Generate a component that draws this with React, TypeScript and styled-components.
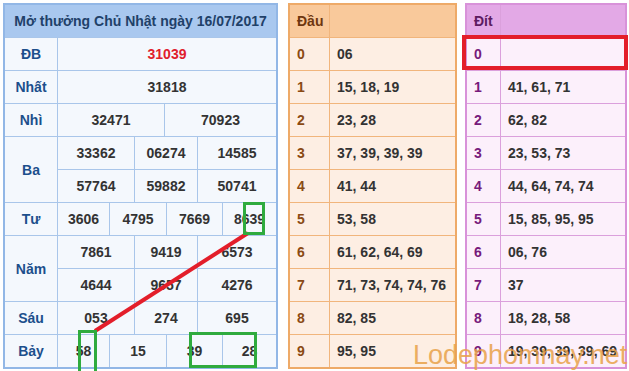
import React from 'react';
import styled, { createGlobalStyle } from 'styled-components';

const Global = createGlobalStyle`
  html, body { margin: 0; padding: 0; background: #ffffff; }
  body { font-family: "Liberation Sans", Arial, sans-serif; }
`;

const Page = styled.div`
  position: relative;
  width: 629px;
  height: 371px;
  overflow: hidden;
  box-sizing: border-box;
  padding: 3px 0 0 3px;
  display: flex;
  align-items: flex-start;
`;

const Frame = styled.div<{ $line: string; $edge: string; $w: number; $ml?: number }>`
  box-sizing: border-box;
  width: ${p => p.$w}px;
  margin-left: ${p => p.$ml ?? 0}px;
  display: flex;
  flex-direction: column;
  gap: 1px;
  background: ${p => p.$line};
  border: 2px solid ${p => p.$edge};
`;

const Title = styled.div`
  height: 32px;
  background: #a9c8ef;
  color: #1f4169;
  font-weight: bold;
  font-size: 14px;
  display: flex;
  align-items: center;
  justify-content: center;
`;

const Section = styled.div`
  display: grid;
  grid-template-columns: 52px 1fr;
  gap: 1px;
`;

const Label = styled.div`
  background: #f4f8fd;
  color: #1c4f8c;
  font-weight: bold;
  font-size: 14px;
  display: flex;
  align-items: center;
  justify-content: center;
`;

const Values = styled.div`
  display: flex;
  flex-direction: column;
  gap: 1px;
`;

const SubRow = styled.div<{ $cols: string }>`
  display: grid;
  grid-template-columns: ${p => p.$cols};
  gap: 1px;
`;

const Num = styled.div<{ $red?: boolean }>`
  height: 32px;
  background: #f4f8fd;
  color: ${p => (p.$red ? '#e0202c' : '#333333')};
  font-weight: bold;
  font-size: 14px;
  display: flex;
  align-items: center;
  justify-content: center;
`;

const LRow = styled.div<{ $cols: string }>`
  display: grid;
  grid-template-columns: ${p => p.$cols};
  gap: 1px;
`;

const LCell = styled.div<{ $bg: string; $fg: string }>`
  height: 32px;
  box-sizing: border-box;
  padding-left: 7px;
  background: ${p => p.$bg};
  color: ${p => p.$fg};
  font-weight: bold;
  font-size: 14px;
  display: flex;
  align-items: center;
  white-space: nowrap;
`;

const Overlay = styled.svg`
  position: absolute;
  left: 0;
  top: 0;
  pointer-events: none;
`;

const Watermark = styled.div`
  position: absolute;
  left: 413px;
  top: 342px;
  font-size: 27px;
  line-height: 27px;
  color: #e9a24a;
  opacity: 0.85;
  white-space: nowrap;
  pointer-events: none;
`;

type Sec = { label: string; rows: { cols: string; vals: string[] }[] };

const C4 = '51px 56px 55px 1fr';
const C3 = '76px 62px 1fr';

const sections: Sec[] = [
  { label: 'ĐB', rows: [{ cols: '1fr', vals: ['31039'] }] },
  { label: 'Nhất', rows: [{ cols: '1fr', vals: ['31818'] }] },
  { label: 'Nhì', rows: [{ cols: '106px 1fr', vals: ['32471', '70923'] }] },
  {
    label: 'Ba',
    rows: [
      { cols: C3, vals: ['33362', '06274', '14585'] },
      { cols: C3, vals: ['57764', '59882', '50741'] },
    ],
  },
  { label: 'Tư', rows: [{ cols: C4, vals: ['3606', '4795', '7669', '8639'] }] },
  {
    label: 'Năm',
    rows: [
      { cols: C3, vals: ['7861', '9419', '6573'] },
      { cols: C3, vals: ['4644', '9657', '4276'] },
    ],
  },
  { label: 'Sáu', rows: [{ cols: C3, vals: ['053', '274', '695'] }] },
  { label: 'Bảy', rows: [{ cols: C4, vals: ['58', '15', '39', '28'] }] },
];

const dau = [
  '06',
  '15, 18, 19',
  '23, 28',
  '37, 39, 39, 39',
  '41, 44',
  '53, 58',
  '61, 62, 64, 69',
  '71, 73, 74, 74, 76',
  '82, 85',
  '95, 95',
];

const dit = [
  '',
  '41, 61, 71',
  '62, 82',
  '23, 53, 73',
  '44, 64, 74, 74',
  '15, 85, 95, 95',
  '06, 76',
  '37',
  '18, 28, 58',
  '19, 39, 39, 39, 69',
];

type Theme = {
  head: string;
  cell: string;
  line: string;
  edge: string;
  label: string;
  headText: string;
};

const orange: Theme = {
  head: '#f9c99b',
  cell: '#fdeee3',
  line: '#f1b57c',
  edge: '#eeaa68',
  label: '#8a4a14',
  headText: '#6e3710',
};

const purple: Theme = {
  head: '#e3a9e6',
  cell: '#fcf0fb',
  line: '#dba0dc',
  edge: '#d892d9',
  label: '#771a7b',
  headText: '#5c1b60',
};

function Lookup({
  title,
  data,
  t,
  w,
  cols,
  ml,
}: {
  title: string;
  data: string[];
  t: Theme;
  w: number;
  cols: string;
  ml: number;
}) {
  return (
    <Frame $line={t.line} $edge={t.edge} $w={w} $ml={ml}>
      <LRow $cols={cols}>
        <LCell $bg={t.head} $fg={t.headText}>{title}</LCell>
        <LCell $bg={t.head} $fg={t.headText} />
      </LRow>
      {data.map((v, i) => (
        <LRow $cols={cols} key={i}>
          <LCell $bg={t.cell} $fg={t.label}>{i}</LCell>
          <LCell $bg={t.cell} $fg="#333333">{v}</LCell>
        </LRow>
      ))}
    </Frame>
  );
}

export default function App() {
  return (
    <>
      <Global />
      <Page>
        <Frame $line="#a9c6ea" $edge="#92b7e6" $w={275}>
          <Title>Mở thưởng Chủ Nhật ngày 16/07/2017</Title>
          {sections.map(s => (
            <Section key={s.label}>
              <Label>{s.label}</Label>
              <Values>
                {s.rows.map((r, ri) => (
                  <SubRow $cols={r.cols} key={ri}>
                    {r.vals.map((v, vi) => (
                      <Num key={vi} $red={s.label === 'ĐB'}>
                        {v}
                      </Num>
                    ))}
                  </SubRow>
                ))}
              </Values>
            </Section>
          ))}
        </Frame>
        <Lookup title="Đầu" data={dau} t={orange} w={169} cols="39px 1fr" ml={10} />
        <Lookup title="Đít" data={dit} t={purple} w={162} cols="33px 1fr" ml={8} />
        <Watermark>Lodephomnay.net</Watermark>
        <Overlay width={629} height={371} viewBox="0 0 629 371">
          <line x1={248} y1={233} x2={95} y2={331} stroke="#e31e2a" strokeWidth={4} />
          <g fill="none" stroke="#2fab3e" strokeWidth={3}>
            <rect x={244.5} y={203.5} width={19} height={30} />
            <rect x={79.5} y={331.5} width={16} height={44} />
            <rect x={190.5} y={333.5} width={65} height={33} />
          </g>
          <rect x={464} y={37} width={162} height={31} fill="none" stroke="#e31e2a" strokeWidth={4} />
        </Overlay>
      </Page>
    </>
  );
}
